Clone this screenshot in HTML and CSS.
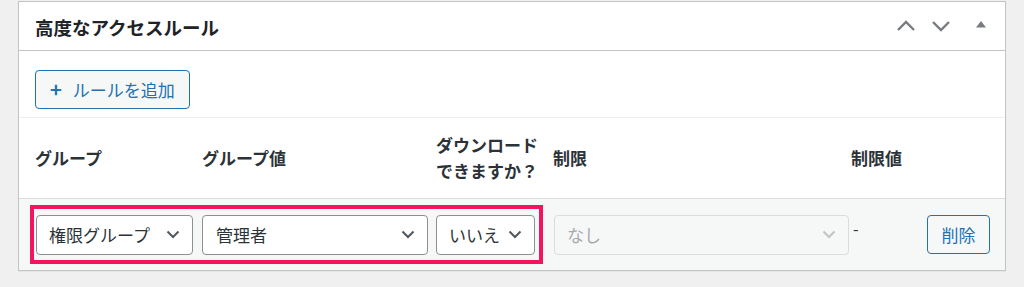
FILE: index.html
```html
<!DOCTYPE html>
<html lang="ja">
<head>
<meta charset="utf-8">
<title>高度なアクセスルール</title>
<link rel="stylesheet" href="styles.css">
</head>
<body>
<div class="panel">
  <div class="panel-head">
    <h2 class="title">高度なアクセスルール</h2>
    <div class="head-actions">
      <svg class="hicon" width="20" height="12" viewBox="0 0 20 12"><path d="M2 10 L10 2 L18 10" fill="none" stroke="#787c82" stroke-width="2.4"/></svg>
      <svg class="hicon" width="20" height="12" viewBox="0 0 20 12"><path d="M2 2 L10 10 L18 2" fill="none" stroke="#787c82" stroke-width="2.4"/></svg>
      <svg class="htri" width="12" height="8" viewBox="0 0 12 8"><path d="M1 7.5 L6 1 L11 7.5 Z" fill="#787c82"/></svg>
    </div>
  </div>
  <div class="toolbar">
    <button class="add-btn"><span class="plus">+</span>ルールを追加</button>
  </div>
  <div class="grid head-row">
    <div class="th">グループ</div>
    <div class="th">グループ値</div>
    <div class="th">ダウンロード<br>できますか？</div>
    <div class="th">制限</div>
    <div class="th">制限値</div>
    <div class="th"></div>
  </div>
  <div class="grid body-row">
    <div class="cell"><div class="sel w1"><span>権限グループ</span><svg width="14" height="9" viewBox="0 0 14 9"><path d="M1.5 1.5 L7 7 L12.5 1.5" fill="none" stroke="#50575e" stroke-width="2"/></svg></div></div>
    <div class="cell"><div class="sel w2"><span>管理者</span><svg width="14" height="9" viewBox="0 0 14 9"><path d="M1.5 1.5 L7 7 L12.5 1.5" fill="none" stroke="#50575e" stroke-width="2"/></svg></div></div>
    <div class="cell"><div class="sel w3"><span>いいえ</span><svg width="14" height="9" viewBox="0 0 14 9"><path d="M1.5 1.5 L7 7 L12.5 1.5" fill="none" stroke="#50575e" stroke-width="2"/></svg></div></div>
    <div class="cell"><div class="sel w4 disabled"><span>なし</span><svg width="14" height="9" viewBox="0 0 14 9"><path d="M1.5 1.5 L7 7 L12.5 1.5" fill="none" stroke="#c3c4c7" stroke-width="2"/></svg></div></div>
    <div class="cell dash">-</div>
    <div class="cell"><button class="del-btn">削除</button></div>
    <div class="highlight"></div>
  </div>
</div>
</body>
</html>
```

FILE: styles.css
```css
* { box-sizing: border-box; }
html, body { margin: 0; padding: 0; }
body {
  background: #f0f0f1;
  font-family: "Noto Sans CJK JP", "Noto Sans", sans-serif;
  color: #1d2327;
  height: 287px;
  overflow: hidden;
}
.panel {
  margin: 1px 18px 0 18px;
  background: #fff;
  border: 1px solid #c3c4c7;
  box-shadow: 0 1px 1px rgba(0,0,0,0.04);
}
.panel-head {
  height: 49px;
  border-bottom: 1px solid #c3c4c7;
  display: flex;
  align-items: center;
  justify-content: space-between;
  padding: 0 18px 0 16px;
}
.title {
  margin: 0;
  font-size: 18.5px;
  font-weight: 700;
  line-height: 1;
  color: #1d2327;
  position: relative;
  top: 1px;
}
.head-actions {
  display: flex;
  align-items: center;
  gap: 15px;
}
.htri { margin-left: 9px; position: relative; top: -2px; }
.toolbar {
  padding: 19px 16px 8px;
  border-bottom: 1px solid #ececec;
}
.add-btn {
  height: 39px;
  padding: 0 14px 0 14px;
  border: 1px solid #2271b1;
  border-radius: 4px;
  background: #f6f7f7;
  color: #2271b1;
  font-family: inherit;
  font-size: 17px;
  display: flex;
  align-items: center;
}
.plus {
  font-weight: 700;
  font-size: 20px;
  margin-right: 11px;
  position: relative;
  top: -1px;
}
.grid {
  display: grid;
  grid-template-columns: 167px 234px 117px 298px 76px 1fr;
  padding-left: 16px;
}
.head-row {
  height: 81px;
  border-bottom: 1px solid #dcdcde;
  align-items: center;
}
.th {
  font-size: 17px;
  font-weight: 700;
  color: #2c3338;
  line-height: 26px;
}
.body-row {
  position: relative;
  height: 71px;
  background: #f6f7f7;
  align-items: center;
}
.cell { display: flex; align-items: center; }
.sel {
  height: 40px;
  border: 1px solid #8c8f94;
  border-radius: 4px;
  background: #fff;
  display: flex;
  align-items: center;
  justify-content: space-between;
  padding: 0 12px 0 12px;
  font-size: 17px;
  color: #2c3338;
}
.w1 { width: 157px; margin-left: 1px; }
.w2 { width: 226px; padding-left: 13px; }
.w3 { width: 99px; }
.w4 { width: 295px; margin-left: 1px; }
.sel.disabled {
  background: #f6f7f7;
  border-color: #dcdcde;
  color: #a7aaad;
}
.dash {
  font-size: 16px;
  color: #2c3338;
  margin-left: 2px;
  position: relative;
  top: -7px;
}
.del-btn {
  width: 63px;
  height: 39px;
  border: 1px solid #2271b1;
  border-radius: 4px;
  background: #f6f7f7;
  color: #2271b1;
  font-family: inherit;
  font-size: 17px;
  padding: 0;
}
.highlight {
  position: absolute;
  left: 11px;
  top: 6px;
  width: 513px;
  height: 59px;
  border: 4px solid #f2145c;
  pointer-events: none;
}
```
